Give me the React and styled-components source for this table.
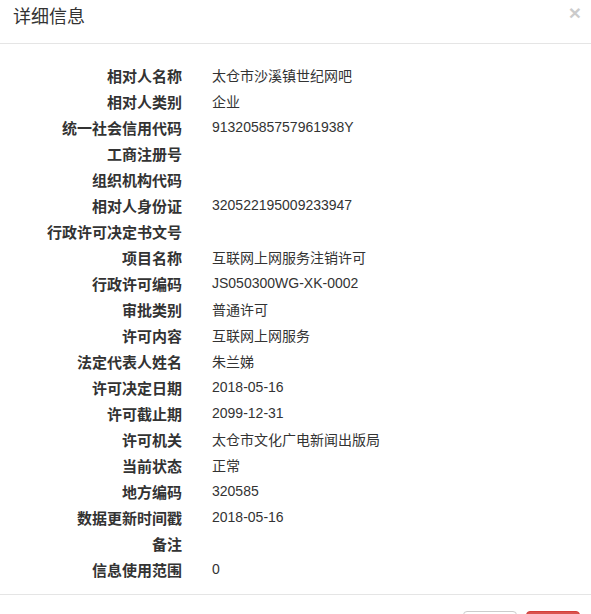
import React from "react";
import styled, { createGlobalStyle } from "styled-components";

const GlobalStyle = createGlobalStyle`
  body {
    margin: 0;
    background: #fff;
    font-family: "Liberation Sans", "Noto Sans CJK SC", sans-serif;
    color: #333;
  }
`;

const Modal = styled.div`
  width: 100%;
  background: #fff;
`;

const Header = styled.div`
  display: flex;
  justify-content: space-between;
  align-items: flex-start;
  height: 44px;
  box-sizing: border-box;
  padding: 4px 10px 0 13px;
  border-bottom: 1px solid #e5e5e5;
`;

const Title = styled.h4`
  margin: 0;
  font-size: 18px;
  line-height: 26px;
  font-weight: normal;
  color: #333;
`;

const Close = styled.button`
  border: 0;
  background: none;
  padding: 0;
  margin-top: -2px;
  font-family: "Liberation Sans", sans-serif;
  font-size: 21px;
  font-weight: bold;
  line-height: 21px;
  color: #000;
  opacity: 0.2;
`;

const Body = styled.div`
  padding: 18px 15px 12px 0;
`;

const Row = styled.div`
  display: grid;
  grid-template-columns: 182px 1fr;
  column-gap: 30px;
  height: 26px;
  align-items: center;
`;

const Label = styled.div`
  text-align: right;
  font-size: 15px;
  font-weight: bold;
  color: #333;
  white-space: nowrap;
`;

const Value = styled.div`
  font-size: 14px;
  color: #333;
  white-space: nowrap;
`;

const Footer = styled.div`
  display: flex;
  justify-content: flex-end;
  gap: 9px;
  padding: 16px 11px 15px 15px;
  border-top: 1px solid #e5e5e5;
`;

const Button = styled.button`
  width: 54px;
  height: 34px;
  border-radius: 4px;
  font-size: 14px;
  font-family: "Liberation Sans", "Noto Sans CJK SC", sans-serif;
  border: 1px solid ${(p) => (p.$danger ? "#d43f3a" : "#ccc")};
  background: ${(p) => (p.$danger ? "#d9534f" : "#fff")};
  color: ${(p) => (p.$danger ? "#fff" : "#333")};
`;

const fields = [
  ["相对人名称", "太仓市沙溪镇世纪网吧"],
  ["相对人类别", "企业"],
  ["统一社会信用代码", "91320585757961938Y"],
  ["工商注册号", ""],
  ["组织机构代码", ""],
  ["相对人身份证", "320522195009233947"],
  ["行政许可决定书文号", ""],
  ["项目名称", "互联网上网服务注销许可"],
  ["行政许可编码", "JS050300WG-XK-0002"],
  ["审批类别", "普通许可"],
  ["许可内容", "互联网上网服务"],
  ["法定代表人姓名", "朱兰娣"],
  ["许可决定日期", "2018-05-16"],
  ["许可截止期", "2099-12-31"],
  ["许可机关", "太仓市文化广电新闻出版局"],
  ["当前状态", "正常"],
  ["地方编码", "320585"],
  ["数据更新时间戳", "2018-05-16"],
  ["备注", ""],
  ["信息使用范围", "0"],
];

function App() {
  return (
    <Modal>
      <GlobalStyle />
      <Header>
        <Title>详细信息</Title>
        <Close>×</Close>
      </Header>
      <Body>
        {fields.map(([label, value]) => (
          <Row key={label}>
            <Label>{label}</Label>
            <Value>{value}</Value>
          </Row>
        ))}
      </Body>
      <Footer>
        <Button>关闭</Button>
        <Button $danger>删除</Button>
      </Footer>
    </Modal>
  );
}

export default App;
